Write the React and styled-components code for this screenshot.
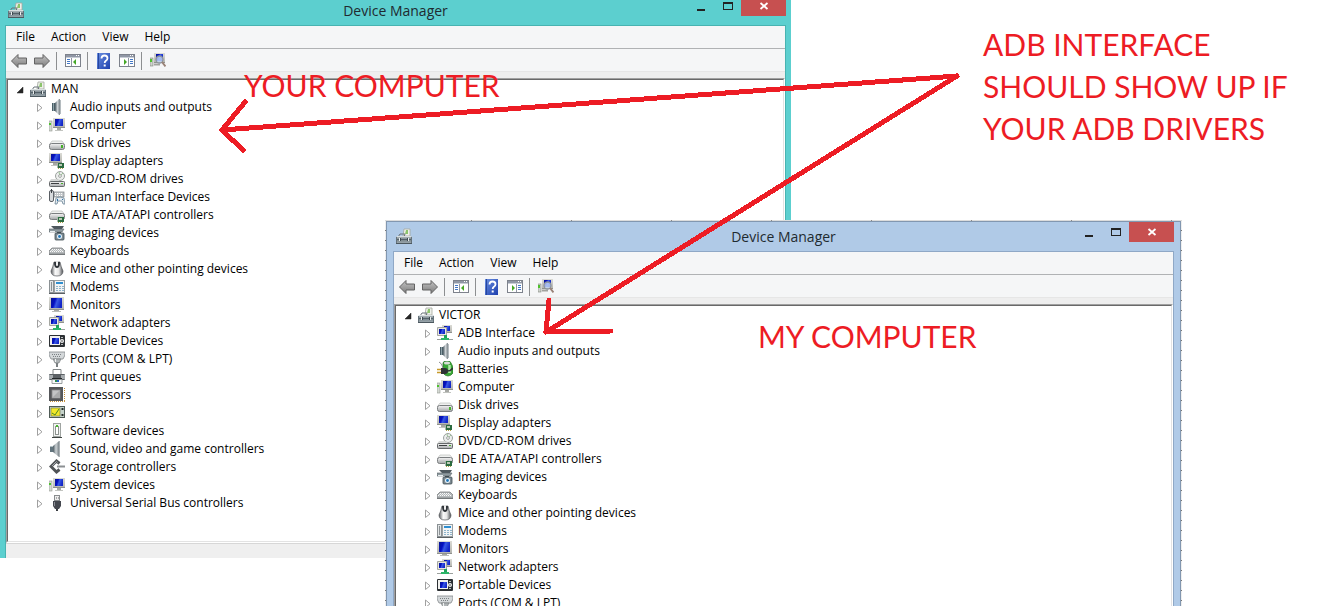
import React from "react";
import styled, { createGlobalStyle } from "styled-components";

const GlobalStyle = createGlobalStyle`
  *, *::before, *::after { box-sizing: border-box; }
  body {
    margin: 0;
    background: #fff;
    color: #000;
    font-family: "Open Sans", "Noto Sans", sans-serif;
    font-size: 12px;
  }
  button { font: inherit; color: inherit; background: none; border: 0; padding: 0; }
  ul { list-style: none; margin: 0; padding: 0; }
`;

/* ---------- icon drawings, all on a 16 x 16 grid ---------- */

const Svg = styled.svg`
  display: block;
  flex: none;
  width: 16px;
  height: 16px;
`;

const HiddenDefs = styled.svg`
  position: absolute;
  width: 0;
  height: 0;
`;

const Gradients = () => (
  <HiddenDefs aria-hidden="true">
    <defs>
      <linearGradient id="screen" x1="0" y1="0" x2="1" y2="0.3">
        <stop offset="0" stopColor="#0a1690" />
        <stop offset="0.4" stopColor="#0410c4" />
        <stop offset="0.6" stopColor="#3a5ae4" />
        <stop offset="1" stopColor="#1226c8" />
      </linearGradient>
      <linearGradient id="bezel" x1="0" y1="0" x2="0" y2="1">
        <stop offset="0" stopColor="#dcdcd6" />
        <stop offset="1" stopColor="#b2b3ae" />
      </linearGradient>
      <linearGradient id="metal" x1="0" y1="0" x2="0" y2="1">
        <stop offset="0" stopColor="#f6f6f6" />
        <stop offset="1" stopColor="#a4a6a8" />
      </linearGradient>
      <linearGradient id="cone" x1="0" y1="0" x2="1" y2="0">
        <stop offset="0" stopColor="#4e5c64" />
        <stop offset="0.5" stopColor="#cdd3d6" />
        <stop offset="1" stopColor="#7d868b" />
      </linearGradient>
      <linearGradient id="arrowfill" x1="0" y1="0" x2="0" y2="1">
        <stop offset="0" stopColor="#c4c4c4" />
        <stop offset="1" stopColor="#7c7c7c" />
      </linearGradient>
      <linearGradient id="helpfill" x1="0" y1="0" x2="1" y2="1">
        <stop offset="0" stopColor="#6a8fe0" />
        <stop offset="1" stopColor="#1d3fae" />
      </linearGradient>
      <linearGradient id="mousefill" x1="0" y1="0" x2="1" y2="0">
        <stop offset="0" stopColor="#55585c" />
        <stop offset="0.35" stopColor="#fafafa" />
        <stop offset="0.65" stopColor="#e6e6e6" />
        <stop offset="1" stopColor="#4c4f53" />
      </linearGradient>
      <linearGradient id="casefill" x1="0" y1="0" x2="0" y2="1">
        <stop offset="0" stopColor="#c3cacd" />
        <stop offset="0.5" stopColor="#76838a" />
        <stop offset="1" stopColor="#9aa6ac" />
      </linearGradient>
    </defs>
  </HiddenDefs>
);

const Monitor = ({ x = 0, y = 0, w = 13, h = 10, inset = 2 }) => (
  <g transform={`translate(${x} ${y})`} shapeRendering="crispEdges">
    <rect width={w} height={h} fill="url(#bezel)" />
    <rect y={h - 1} width={w} height="1" fill="#8f918e" />
    <rect x={inset} y="1" width={w - inset * 2} height={h - 3} fill="url(#screen)" />
  </g>
);

const Chip = ({ x = 8, y = 10 }) => (
  <g transform={`translate(${x} ${y})`} shapeRendering="crispEdges">
    <rect width="7" height="5" fill="#2b6b40" />
    <rect x="2" y="1" width="3" height="2" fill="#b9c9b4" />
    <rect x="0" y="0" width="1" height="5" fill="#aab8ac" />
    <path d="M1 5.500h1M3 5.500h1M5 5.500h1" stroke="#b0a04a" />
  </g>
);

const art = {
  toolbox: (
    <>
      <path d="M7 8l1-7h6v7z" fill="#eef0ea" stroke="#a3a79f" strokeWidth="0.800" />
      <path d="M9 6l1-4h2v4z" fill="#8cc46c" />
      <path d="M2 9l2-3h5l-1 3z" fill="none" stroke="#6a747a" />
      <path d="M0 9l2-1h13l1 1v6H0z" fill="url(#casefill)" />
      <path d="M1 8.500h14" stroke="#d9dfe1" />
      <path d="M0 11.500h16" stroke="#55626a" />
      <path d="M0 15.500h16" stroke="#4c585f" />
      <path d="M3.500 10v3M12.500 10v3" stroke="#e9edee" />
      <path d="M4.500 10v3M11.500 10v3" stroke="#3f4a50" />
      <path d="M0.500 9v6M15.500 9v6" stroke="#65727a" />
    </>
  ),
  speaker: (
    <>
      <path d="M3 4h3v8H3z" fill="#4b6068" />
      <path d="M6 4l4-4h1v16h-1l-4-4z" fill="url(#cone)" />
      <path d="M11.500 1v14" stroke="#b5bcc0" />
      <path d="M4.500 4v8" stroke="#8fa2a9" />
    </>
  ),
  sound: (
    <>
      <path d="M1 5h3v6H1z" fill="#62747d" />
      <path d="M4 5l6-5v16l-6-5z" fill="url(#cone)" />
      <path d="M10.500 0v16" stroke="#a9b0b4" />
      <path d="M1 5.500h3" stroke="#b4c1c7" />
    </>
  ),
  computer: (
    <>
      <rect y="4" width="3" height="10" fill="#d5d9d3" stroke="#92978f" strokeWidth="0.600" />
      <rect y="6" width="2" height="2" fill="#4cc22b" />
      <Monitor x={4} y={1} w={12} h={10} />
      <path d="M8 11h4v2H8z" fill="#a6a8a4" />
      <path d="M6 13.500h8" stroke="#c2c4c0" />
    </>
  ),
  disk: (
    <>
      <path d="M3 6h10l3 4H0z" fill="#f0f1f0" stroke="#b3b5b4" strokeWidth="0.600" />
      <rect x="0.500" y="8.500" width="15" height="6" rx="2" fill="url(#metal)" stroke="#7b7e80" />
      <rect x="12" y="10" width="2" height="3" fill="#46b02a" />
    </>
  ),
  display: (
    <>
      <Monitor x={0} y={0} w={13} h={10} />
      <path d="M4 10h4v2H4z" fill="#a6a8a4" />
      <path d="M2 12.500h6" stroke="#c2c4c0" />
      <Chip x={8} y={10} />
    </>
  ),
  dvd: (
    <>
      <circle cx="11" cy="5" r="4.500" fill="#eceeed" stroke="#9ca19e" />
      <path d="M11 5l3-3M11 5l-1-4" stroke="#9cc696" />
      <circle cx="11" cy="5" r="1.400" fill="#fff" stroke="#8c8f8d" strokeWidth="0.800" />
      <path d="M2 8h6l3 2h5v1H0z" fill="#d6d8d7" />
      <rect x="0.500" y="10.500" width="15" height="5" rx="1" fill="url(#metal)" stroke="#66696b" />
      <path d="M2 12.500h8" stroke="#3c3f41" />
      <rect x="12" y="12" width="2" height="1" fill="#46b02a" />
    </>
  ),
  hid: (
    <>
      <rect x="0.500" y="1.500" width="4" height="11" rx="1.500" fill="#d7dadd" stroke="#595e63" />
      <path d="M2.500 0v4" stroke="#3a3f44" />
      <rect x="5" y="3" width="10" height="5" fill="#c5c9cc" stroke="#7b8085" strokeWidth="0.700" />
      <path d="M6 4.500h8M6 6.500h8" stroke="#fff" strokeDasharray="1 1" />
      <path d="M7 9q4-2 8 0l1 6h-2l-1-3h-4l-1 3H6z" fill="#e4ebf0" stroke="#6b8496" strokeWidth="0.800" />
      <path d="M8.500 10v2M13 10.500h1" stroke="#2a6fa8" />
    </>
  ),
  ide: (
    <>
      <path d="M3 4h10l3 4H0z" fill="#f0f1f0" stroke="#b3b5b4" strokeWidth="0.600" />
      <rect x="0.500" y="6.500" width="15" height="6" rx="2" fill="url(#metal)" stroke="#7b7e80" />
      <Chip x={8} y={10} />
    </>
  ),
  imaging: (
    <>
      <path d="M2 1h13l-2 3H5z" fill="#4e585e" />
      <path d="M0 4h15l-2 3H0z" fill="#8f9a9f" stroke="#596368" strokeWidth="0.600" />
      <path d="M1 6.500h5" stroke="#e8eef0" />
      <rect x="6" y="8" width="9" height="7" rx="1" fill="#7d8b93" stroke="#404b51" strokeWidth="0.800" />
      <path d="M8 7.500h4" stroke="#404b51" />
      <circle cx="10.500" cy="11.500" r="2.500" fill="#e9f3fa" />
      <circle cx="10.500" cy="11.500" r="1.400" fill="#2277b8" />
    </>
  ),
  keyboard: (
    <>
      <path d="M3 5h10l3 3v3H0V8z" fill="#b4b8ba" stroke="#7d8183" strokeWidth="0.800" />
      <path d="M3 6.500h10M1 8.500h14" stroke="#fafafa" strokeDasharray="1 1" />
      <path d="M2 7.500h12" stroke="#e6e8e9" strokeDasharray="1 1" />
      <path d="M0 11.500h16" stroke="#75797b" />
    </>
  ),
  mouse: (
    <>
      <path d="M5 1h6q1 5 3 9 0 5-6 5t-6-5q2-4 3-9z" fill="url(#mousefill)" stroke="#53565a" strokeWidth="0.700" />
      <path d="M5 1q0 6 3 6t3-6z" fill="#2f3338" />
      <rect x="7" y="0" width="2" height="5" rx="1" fill="#f0f0f0" />
    </>
  ),
  modem: (
    <>
      <rect x="0.500" y="1.500" width="4" height="12" fill="#e2e5e6" stroke="#8b9194" />
      <path d="M2.500 3v9" stroke="#8c9295" />
      <rect x="5.500" y="1.500" width="10" height="12" fill="#f2f4f5" stroke="#9aa0a3" />
      <rect x="7" y="3" width="7" height="2" fill="#2f8fd0" />
      <path d="M7 7.500h8M7 9.500h8M7 11.500h8" stroke="#8fb4cb" strokeDasharray="2 1" />
      <path d="M0 14.500h16" stroke="#5b6063" />
    </>
  ),
  monitor: (
    <>
      <Monitor x={0} y={0} w={15} h={13} />
      <path d="M5 13h5v1H5z" fill="#a6a8a4" />
      <path d="M3 14.500h9" stroke="#b9bbb7" />
    </>
  ),
  network: (
    <>
      <Monitor x={5} y={0} w={10} h={8} inset={2} />
      <path d="M0.500 10.500v-8h9v8z" fill="#e6e6e0" stroke="#a4a6a1" />
      <path d="M2 4h6v5H2z" fill="url(#screen)" />
      <path d="M7 10h3v3H7z" fill="#22a45c" />
      <path d="M0 14.500h16" stroke="#9ba09d" />
      <path d="M4 13h8v2H4z" fill="#2bb568" />
    </>
  ),
  portable: (
    <>
      <rect x="0" y="2" width="16" height="12" rx="1" fill="#2c3034" />
      <rect x="1" y="3" width="10" height="9" fill="#f1f1ee" />
      <rect x="3" y="5" width="7" height="6" fill="url(#screen)" />
      <circle cx="13" cy="8" r="2" fill="#f4f4f4" />
      <circle cx="13" cy="8" r="0.800" fill="#3a3d40" />
      <path d="M12 4.500h2M12 11.500h2" stroke="#b9bcbe" />
    </>
  ),
  port: (
    <>
      <path d="M0 1h16v3l-2 4H2L0 4z" fill="#d4d8da" stroke="#84898b" strokeWidth="0.800" />
      <path d="M3 3.500h10M4 5.500h8" stroke="#7b8083" strokeDasharray="1 1" />
      <path d="M4 8h8l-2 4H6z" fill="#b0b5b7" stroke="#6f7476" strokeWidth="0.600" />
      <path d="M7 12h2v4H7z" fill="#7a7f81" />
      <path d="M6.500 8v3" stroke="#f1f3f3" />
    </>
  ),
  printer: (
    <>
      <path d="M4 0.500h8V6H4z" fill="#fff" stroke="#83888a" />
      <rect x="0" y="5" width="16" height="6" rx="1" fill="#5b6064" />
      <path d="M0 6h4v4H0zM12 6h4v4h-4z" fill="#a6abae" />
      <path d="M3 9.500h10" stroke="#232729" />
      <path d="M3 10.500h10v4H3z" fill="#f7f8f8" stroke="#83888a" strokeWidth="0.800" />
      <rect x="6" y="11" width="2" height="2" fill="#2d8c4a" />
      <rect x="8" y="11" width="2" height="2" fill="#2a62c9" />
    </>
  ),
  processor: (
    <>
      <path d="M1 14.500h15M15.500 1v14" stroke="#c8923c" strokeDasharray="1 1" />
      <rect x="0" y="0" width="14" height="14" fill="#55575a" />
      <rect x="3" y="3" width="8" height="8" fill="#c3c4c5" stroke="#8a8b8c" strokeWidth="0.800" />
      <path d="M3 11l8-8v8z" fill="#a9aaab" />
    </>
  ),
  sensor: (
    <>
      <rect x="0.500" y="1.500" width="15" height="11" fill="#c4d2ca" stroke="#4f5b56" />
      <rect x="2" y="3" width="9" height="8" fill="#f2e829" stroke="#6e7440" strokeWidth="0.600" />
      <path d="M3 8l3 2 4-6" fill="none" stroke="#4b8426" />
      <path d="M13.500 3v2M13.500 9v2" stroke="#262c29" strokeWidth="2" />
    </>
  ),
  software: (
    <>
      <rect x="4.500" y="0.500" width="7" height="13" fill="#f1f3f1" stroke="#9fa4a1" />
      <rect x="6.500" y="3.500" width="3" height="8" fill="#fff" stroke="#8d938f" />
      <rect x="7" y="2" width="2" height="2" fill="#48b82d" />
      <path d="M3 14.500h10" stroke="#3f4441" />
    </>
  ),
  storage: (
    <>
      <path d="M10.500 4.500L7.500 2 2 7.500 7.500 13l3-2.500" fill="none" stroke="#505356" strokeWidth="3" />
      <path d="M8 7.500h8" stroke="#8b8f92" strokeWidth="2" />
      <path d="M8.500 3.500l-1-1L3 7" fill="none" stroke="#a4a8ab" />
    </>
  ),
  usb: (
    <>
      <rect x="5.500" y="0.500" width="5" height="5" fill="#ececec" stroke="#898c8e" />
      <path d="M7.500 2v2M9.500 2v2" stroke="#aaa" />
      <path d="M4 6h8v5l-2 3H6l-2-3z" fill="#45484f" />
      <path d="M5.500 7v4" stroke="#8b8e96" />
      <path d="M7 14h2v2H7z" fill="#3a3d42" />
    </>
  ),
  battery: (
    <>
      <path d="M6 2q0-2 4-2t4 2l2 4v6q-2 3-5 3t-5-3z" fill="#39a836" stroke="#257022" strokeWidth="0.700" />
      <ellipse cx="10" cy="2" rx="3" ry="1.500" fill="#d9ded8" />
      <path d="M12.500 4v8" stroke="#b4eaac" strokeWidth="2.500" />
      <path d="M2 1q3 1 4 6" fill="none" stroke="#8b8e90" />
      <path d="M4 7h4q3 0 3 3t-3 3H4z" fill="#2e3235" />
      <path d="M0 8.500h4M0 11.500h4" stroke="#c79a2b" strokeWidth="1.500" />
      <path d="M10 10q4 0 6-3" fill="none" stroke="#2e3235" strokeWidth="1.500" />
    </>
  ),
  back: <path d="M0.500 8L7 1.500V5h8.500v6H7v3.500z" fill="url(#arrowfill)" stroke="#636363" strokeLinejoin="round" />,
  forward: <path d="M15.500 8L9 1.500V5H0.500v6H9v3.500z" fill="url(#arrowfill)" stroke="#636363" strokeLinejoin="round" />,
  consoleTree: (
    <g shapeRendering="crispEdges">
      <rect x="0.500" y="1.500" width="15" height="12" fill="#fff" stroke="#7d828c" />
      <rect x="1" y="2" width="14" height="2" fill="#9097a5" />
      <path d="M1 4.500h14" stroke="#c7ccd5" />
      <path d="M11 2.500h1M13 2.500h1" stroke="#fff" />
      <path d="M6.500 5v8" stroke="#8f96a3" />
      <path d="M2 6.500h3M2 8.500h3M2 10.500h3" stroke="#4277c6" />
      <path d="M11 6v6l-3-3z" fill="#45a726" shapeRendering="auto" />
    </g>
  ),
  actionPane: (
    <g shapeRendering="crispEdges">
      <rect x="0.500" y="1.500" width="15" height="12" fill="#fff" stroke="#7d828c" />
      <rect x="1" y="2" width="14" height="2" fill="#9097a5" />
      <path d="M1 4.500h14" stroke="#c7ccd5" />
      <path d="M11 2.500h1M13 2.500h1" stroke="#fff" />
      <path d="M9.500 5v8" stroke="#8f96a3" />
      <path d="M11 6.500h3M11 8.500h3M11 10.500h3" stroke="#4277c6" />
      <path d="M5 6v6l3-3z" fill="#45a726" shapeRendering="auto" />
    </g>
  ),
  help: (
    <>
      <rect x="1" y="0" width="13" height="16" fill="url(#helpfill)" />
      <path d="M2.500 0v16" stroke="#27479f" strokeWidth="1" />
      <path d="M5.500 5.500q0-3 3-3t3 2.800q0 1.500-1.600 2.500-1.200.8-1.200 2.200" fill="none" stroke="#fff" strokeWidth="1.800" />
      <rect x="7.700" y="11.500" width="2" height="2" fill="#fff" />
    </>
  ),
  scan: (
    <>
      <rect x="0" y="5" width="3" height="8" fill="#cfd3cd" stroke="#7e837b" strokeWidth="0.600" />
      <rect x="0" y="6" width="2" height="3" fill="#4cc22b" />
      <Monitor x={4} y={0} w={11} h={10} />
      <path d="M4 11.500h6" stroke="#a1a39f" strokeWidth="2" />
      <circle cx="9.500" cy="6.500" r="3.500" fill="#c4d8f4" fillOpacity="0.800" stroke="#8d949c" strokeWidth="1.300" />
      <path d="M12 9l3.500 4.500" stroke="#9a8378" strokeWidth="2" />
    </>
  ),
};

const Icon = ({ name }) => (
  <Svg viewBox="0 0 16 16" aria-hidden="true">
    {art[name]}
  </Svg>
);

/* ---------- window chrome ---------- */

const Desktop = styled.main`
  position: relative;
  height: 100vh;
  overflow: hidden;
  background: #fff;
`;

const Capture = styled.section`
  position: absolute;
  overflow: hidden;
  min-width: 560px;
`;

const RemoteCapture = styled(Capture)`
  top: 0;
  left: 0;
  right: 550px;
  height: 558px;
`;

const LocalCapture = styled(Capture)`
  top: 220px;
  left: 385px;
  right: 159px;
  bottom: 0;
  padding: 1px 1px 0;
  background:
    repeating-linear-gradient(90deg, #dcdcdc 0 86px, #8a8a8a 86px 87px, #dcdcdc 87px 100px) 0 0 / 100% 1px no-repeat,
    repeating-linear-gradient(180deg, #777 0 1px, #eeeeee 1px 10px);
`;

const Frame = styled.div`
  padding: 0 6px 6px;
  margin: ${(p) => (p.$cropped ? "-5px -2px 0" : "0")};
  background: ${(p) => p.$tint};
  border: 1px solid ${(p) => p.$edge};
`;

const TitleBar = styled.header`
  display: grid;
  grid-template-columns: 1fr auto 1fr;
  height: 29px;
`;

const TitleIcon = styled.span`
  padding: 6px 3px;
`;

const Title = styled.h1`
  margin: 0;
  font-size: 14px;
  font-weight: 400;
  line-height: 30px;
  color: #1f2a30;
`;

const Controls = styled.div`
  display: flex;
  justify-content: flex-end;
  align-items: flex-start;
`;

const ControlButton = styled.button`
  display: grid;
  place-items: center;
  width: ${(p) => (p.$close ? "45px" : "27px")};
  height: 20px;
  background: ${(p) => (p.$close ? "#c75050" : "transparent")};
`;

const ControlGlyph = styled.svg`
  display: block;
  width: 10px;
  height: 10px;
`;

const Client = styled.div`
  border: 1px solid ${(p) => p.$edge};
  background: #eeeeee;
`;

const MenuBar = styled.nav`
  display: flex;
  height: 23px;
  padding-left: 2px;
  background: #f5f6f7;
  border-bottom: 1px solid #b0b2b4;
`;

const MenuButton = styled.button`
  padding: 0 8px;
  line-height: 22px;
`;

const ToolBar = styled.div`
  display: flex;
  align-items: flex-end;
  height: 23px;
  padding-left: 1px;
  margin-bottom: 6px;
  background: #f5f6f7;
  border-bottom: 1px solid #e6e6e6;
`;

const ToolButton = styled.button`
  display: grid;
  place-items: center;
  width: 23px;
  height: 20px;
`;

const Separator = styled.span`
  width: 1px;
  height: 18px;
  margin: 0 4px 1px 3px;
  background: #8d8f91;
`;

const TreePane = styled.div`
  border: 1px solid;
  border-color: #a0a0a0 #fff #fff #a0a0a0;
`;

const TreeWell = styled.div`
  padding-bottom: 29px;
  background: #fff;
  border: 1px solid;
  border-color: #696969 #e3e3e3 #e3e3e3 #696969;
`;

const Row = styled.div`
  display: flex;
  align-items: center;
  height: 18px;
  padding-left: ${(p) => (p.$root ? "8px" : "27px")};
  line-height: 18px;
  white-space: nowrap;
`;

const Toggle = styled.button`
  display: grid;
  place-items: center;
  width: 10px;
  height: 18px;
  margin-right: 4px;
`;

const ToggleGlyph = styled.svg`
  display: block;
  width: 8px;
  height: 10px;
`;

const Label = styled.span`
  padding-left: 5px;
`;

const StatusBar = styled.footer`
  height: 22px;
  background: #efefef;
  border-top: 1px solid #d7d7d7;
`;

/* ---------- annotations ---------- */

const Arrows = styled.svg`
  position: absolute;
  top: 0;
  left: 0;
  width: 1000px;
  height: 400px;
  pointer-events: none;
`;

const Note = styled.p`
  position: absolute;
  top: ${(p) => p.$top}px;
  left: ${(p) => p.$left}px;
  margin: 0;
  font-family: Lato, "Open Sans", sans-serif;
  font-size: 30px;
  line-height: 42px;
  color: #ed1c24;
  white-space: nowrap;
`;

const MENU = ["File", "Action", "View", "Help"];

const common = [
  ["imaging", "Imaging devices"],
  ["keyboard", "Keyboards"],
  ["mouse", "Mice and other pointing devices"],
  ["modem", "Modems"],
  ["monitor", "Monitors"],
  ["network", "Network adapters"],
  ["portable", "Portable Devices"],
  ["port", "Ports (COM & LPT)"],
  ["printer", "Print queues"],
  ["processor", "Processors"],
  ["sensor", "Sensors"],
  ["software", "Software devices"],
  ["sound", "Sound, video and game controllers"],
  ["storage", "Storage controllers"],
  ["computer", "System devices"],
  ["usb", "Universal Serial Bus controllers"],
];

const remoteDevices = [
  ["speaker", "Audio inputs and outputs"],
  ["computer", "Computer"],
  ["disk", "Disk drives"],
  ["display", "Display adapters"],
  ["dvd", "DVD/CD-ROM drives"],
  ["hid", "Human Interface Devices"],
  ["ide", "IDE ATA/ATAPI controllers"],
  ...common,
];

const localDevices = [
  ["network", "ADB Interface"],
  ["speaker", "Audio inputs and outputs"],
  ["battery", "Batteries"],
  ["computer", "Computer"],
  ["disk", "Disk drives"],
  ["display", "Display adapters"],
  ["dvd", "DVD/CD-ROM drives"],
  ["ide", "IDE ATA/ATAPI controllers"],
  ...common.slice(0, 8),
];

const Tool = ({ name, label }) => (
  <ToolButton type="button" aria-label={label}>
    <Icon name={name} />
  </ToolButton>
);

const TreeRow = ({ root, icon, text }) => (
  <Row $root={root}>
    <Toggle type="button" aria-label={(root ? "Collapse " : "Expand ") + text}>
      <ToggleGlyph viewBox="0 0 8 10">
        {root ? (
          <path d="M6 3v6H0z" fill="#262626" stroke="#262626" strokeWidth="0.500" />
        ) : (
          <path d="M1.500 2v7.500L6 5.800z" fill="#fff" stroke="#a0a0a0" />
        )}
      </ToggleGlyph>
    </Toggle>
    <Icon name={icon} />
    <Label>{text}</Label>
  </Row>
);

const DeviceManager = ({ host, devices, tint, edge, innerEdge, cropped }) => (
  <Frame $tint={tint} $edge={edge} $cropped={cropped}>
    <TitleBar>
      <TitleIcon>
        <Icon name="toolbox" />
      </TitleIcon>
      <Title>Device Manager</Title>
      <Controls>
        <ControlButton type="button" aria-label="Minimize">
          <ControlGlyph viewBox="0 0 10 10">
            <path d="M1 8h8v2H1z" fill="#222" />
          </ControlGlyph>
        </ControlButton>
        <ControlButton type="button" aria-label="Maximize">
          <ControlGlyph viewBox="0 0 10 10" shapeRendering="crispEdges">
            <path d="M0 1h10v8H0zM1 3v5h8V3z" fill="#222" fillRule="evenodd" />
          </ControlGlyph>
        </ControlButton>
        <ControlButton type="button" aria-label="Close" $close>
          <ControlGlyph viewBox="0 0 10 10">
            <path d="M1.500 2l7 6M8.500 2l-7 6" stroke="#fff" strokeWidth="1.800" />
          </ControlGlyph>
        </ControlButton>
      </Controls>
    </TitleBar>
    <Client $edge={innerEdge}>
      <MenuBar>
        {MENU.map((m) => (
          <MenuButton type="button" key={m}>
            {m}
          </MenuButton>
        ))}
      </MenuBar>
      <ToolBar>
        <Tool name="back" label="Back" />
        <Tool name="forward" label="Forward" />
        <Separator />
        <Tool name="consoleTree" label="Show/Hide Console Tree" />
        <Separator />
        <Tool name="help" label="Help" />
        <Tool name="actionPane" label="Show/Hide Action Pane" />
        <Separator />
        <Tool name="scan" label="Scan for hardware changes" />
      </ToolBar>
      <TreePane>
        <TreeWell>
          <TreeRow root icon="toolbox" text={host} />
          <ul>
            {devices.map(([icon, text]) => (
              <li key={text}>
                <TreeRow icon={icon} text={text} />
              </li>
            ))}
          </ul>
        </TreeWell>
      </TreePane>
      <StatusBar />
    </Client>
  </Frame>
);

export default function App() {
  return (
    <Desktop>
      <GlobalStyle />
      <Gradients />
      <RemoteCapture>
        <DeviceManager
          host="MAN"
          devices={remoteDevices}
          tint="#5ccfcf"
          edge="#48b3b1"
          innerEdge="#48b3b1"
          cropped
        />
      </RemoteCapture>
      <LocalCapture>
        <DeviceManager
          host="VICTOR"
          devices={localDevices}
          tint="#b0cae7"
          edge="#8297b0"
          innerEdge="#8fa8c6"
        />
      </LocalCapture>
      <Arrows viewBox="0 0 1000 400" aria-hidden="true">
        <g
          fill="none"
          stroke="#ed1c24"
          strokeWidth="5"
          strokeLinecap="round"
          strokeLinejoin="round"
          shapeRendering="crispEdges"
        >
          <path d="M957 76L222 130M245 102L222 130L243 150" />
          <path d="M957 76L546 332M549 300L546 332L611 331" />
        </g>
      </Arrows>
      <Note $top={64} $left={244}>YOUR COMPUTER</Note>
      <Note $top={315} $left={758}>MY COMPUTER</Note>
      <Note $top={23} $left={983}>
        ADB INTERFACE
        <br />
        SHOULD SHOW UP IF
        <br />
        YOUR ADB DRIVERS
      </Note>
    </Desktop>
  );
}
